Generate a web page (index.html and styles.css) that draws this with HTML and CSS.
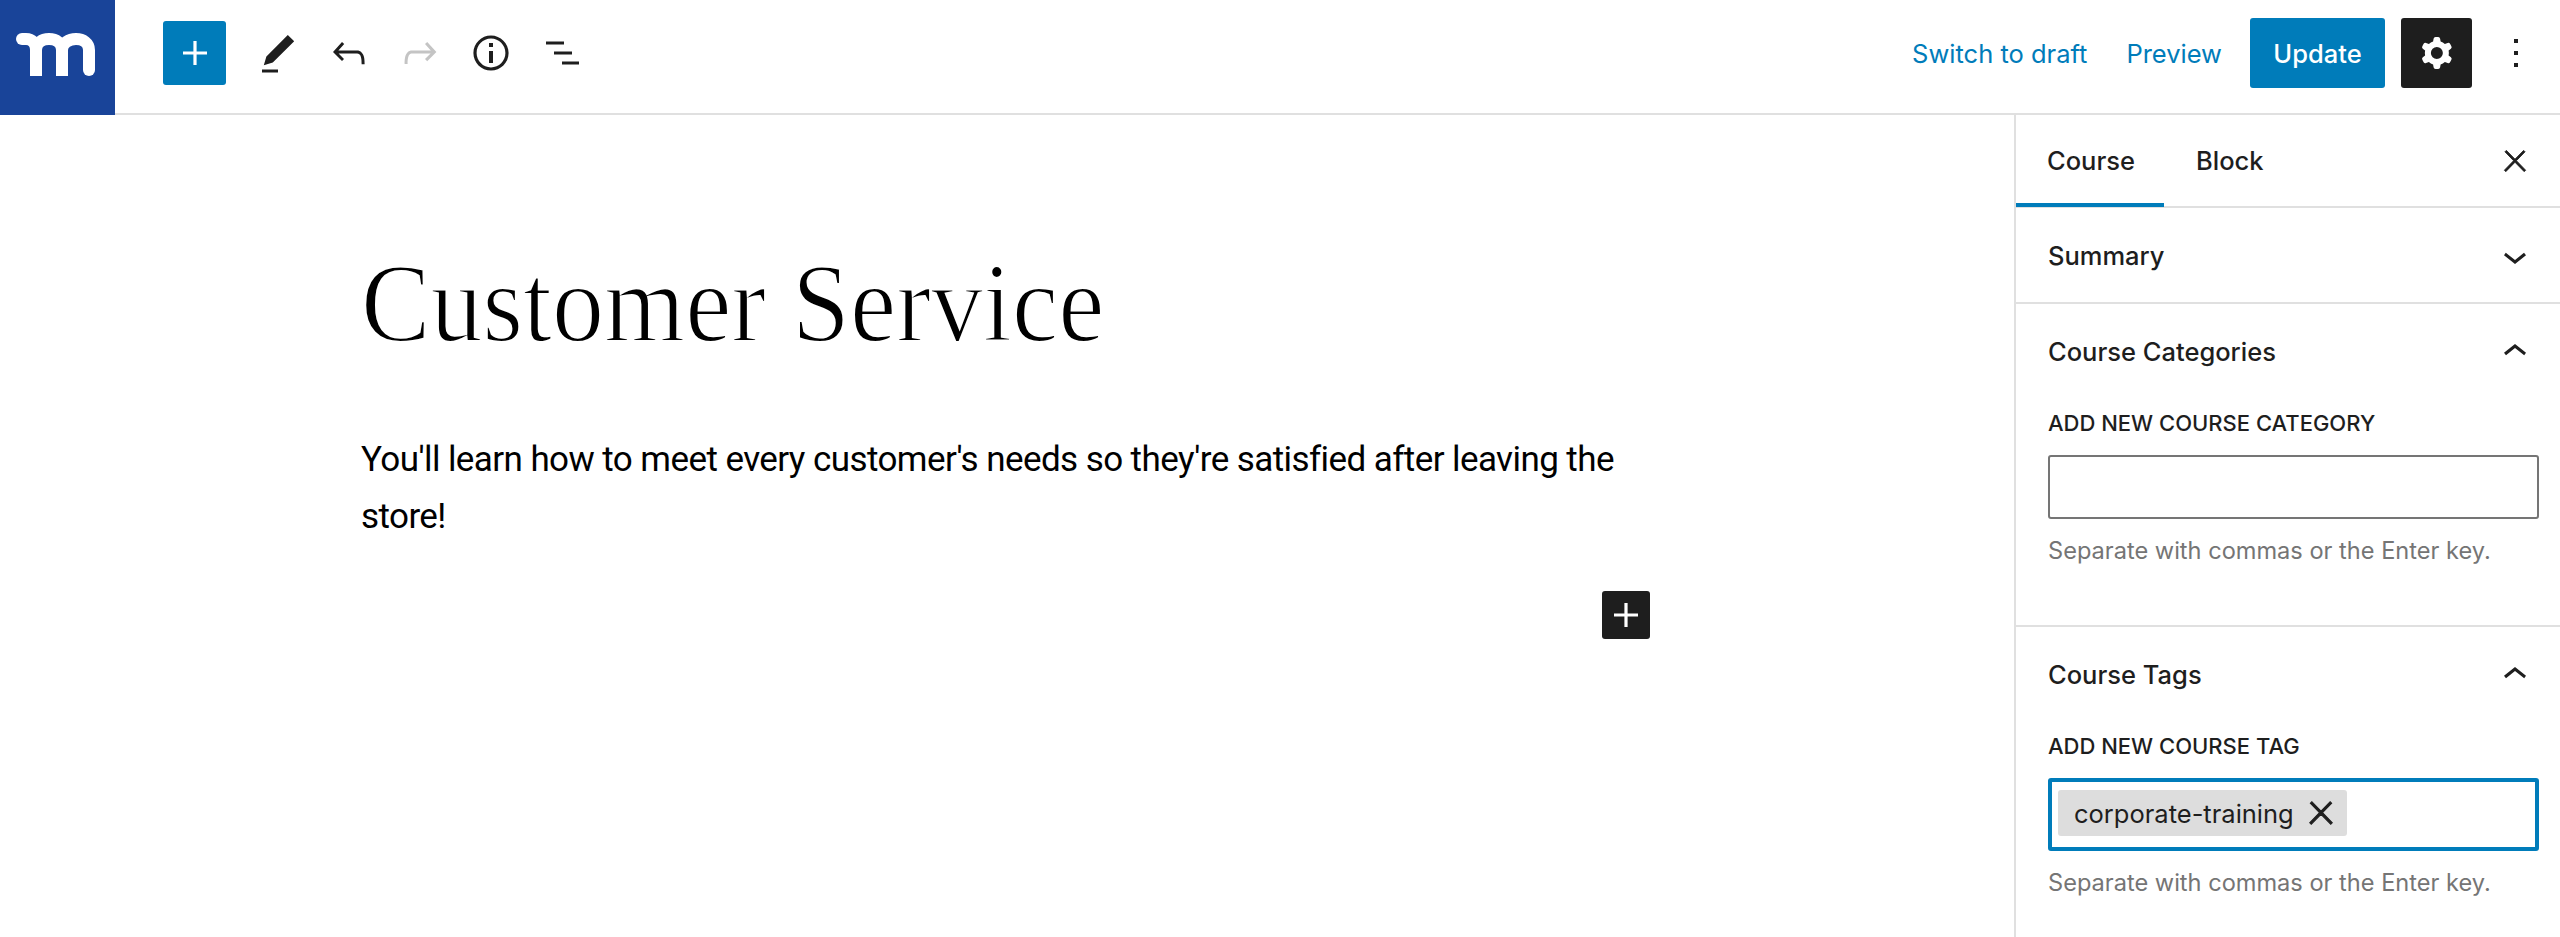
FILE: index.html
```html
<!DOCTYPE html>
<html lang="en">
<head>
<meta charset="utf-8">
<title>Customer Service</title>
<link rel="stylesheet" href="styles.css">
</head>
<body>
<header class="topbar">
  <div class="logo">
    <svg class="logo-mark" viewBox="0 0 115 114"><circle class="logo-dot" cx="22" cy="39" r="6"/><path d="M22 39h4c6 0 10 4 10 11v26M36 50c0-7 6-11 13-11s13 4 13 11v26M62 50c0-7 7-11 14-11s13 4 13 11v20"/><path class="logo-tail" d="M89 60v10"/></svg>
  </div>
  <div class="tools">
    <button class="btn-add"><svg class="icon" viewBox="0 0 24 24"><path d="M18 11.2h-5.2V6h-1.6v5.2H6v1.6h5.2V18h1.6v-5.2H18z"/></svg></button>
    <svg class="icon tool tool-pen" viewBox="0 0 24 24"><path d="M20.1 5.1L16.9 2 6.2 12.7l-1.3 4.4 4.5-1.3L20.1 5.1zM4 20.8h8v-1.5H4v1.5z"/></svg>
    <svg class="icon tool" viewBox="0 0 24 24"><path d="M18.3 11.7c-.6-.6-1.4-.9-2.3-.9H6.7l2.9-3.3-1.1-1-4.5 5L8.5 16l1-1-2.7-2.7H16c.5 0 .9.2 1.3.5 1 1 1 3.4 1 4.5v.3h1.5v-.2c0-1.5 0-4.3-1.5-5.7z"/></svg>
    <svg class="icon tool tool-off" viewBox="0 0 24 24"><path d="M15.6 6.5l-1.1 1 2.9 3.3H8c-.9 0-1.7.3-2.3.9-1.4 1.5-1.4 4.2-1.4 5.6v.2h1.5v-.3c0-1.1 0-3.5 1-4.5.3-.3.7-.5 1.3-.5h9.2L14.5 15l1.1 1.1 4.6-4.6-4.6-5z"/></svg>
    <svg class="icon tool" viewBox="0 0 24 24"><path d="M12 3.2c-4.8 0-8.8 3.9-8.8 8.8 0 4.8 3.9 8.8 8.8 8.8 4.8 0 8.8-3.9 8.8-8.8 0-4.8-4-8.8-8.8-8.8zm0 16c-4 0-7.2-3.3-7.2-7.2C4.8 8 8 4.8 12 4.8s7.2 3.3 7.2 7.2c0 4-3.2 7.2-7.2 7.2zM11 17h2v-6h-2v6zm0-8h2V7h-2v2z"/></svg>
    <svg class="icon tool" viewBox="0 0 24 24"><path d="M4 6.2h9v1.5H4zM8 11.2h9v1.5H8zM12 16.2h8.5v1.5H12z"/></svg>
  </div>
  <div class="actions">
    <a class="link link-draft">Switch to draft</a>
    <a class="link link-preview">Preview</a>
    <button class="btn-update">Update</button>
    <button class="btn-settings"><svg class="icon" viewBox="0 0 24 24"><path fill-rule="evenodd" d="M10.289 4.836A1 1 0 0111.275 4h1.306a1 1 0 01.987.836l.244 1.466c.787.26 1.503.679 2.108 1.218l1.393-.522a1 1 0 011.216.437l.653 1.13a1 1 0 01-.23 1.273l-1.148.944a6.025 6.025 0 010 2.435l1.149.946a1 1 0 01.23 1.272l-.653 1.13a1 1 0 01-1.216.437l-1.394-.522c-.605.54-1.32.958-2.108 1.218l-.244 1.466a1 1 0 01-.987.836h-1.306a1 1 0 01-.986-.836l-.244-1.466a5.995 5.995 0 01-2.108-1.218l-1.394.522a1 1 0 01-1.217-.436l-.653-1.131a1 1 0 01.23-1.272l1.149-.946a6.026 6.026 0 010-2.435l-1.148-.944a1 1 0 01-.23-1.272l.653-1.131a1 1 0 011.217-.437l1.393.522a5.994 5.994 0 012.108-1.218l.244-1.466zM14.929 12a3 3 0 11-6 0 3 3 0 016 0z"/></svg></button>
    <svg class="icon more" viewBox="0 0 24 24"><path d="M13 19h-2v-2h2v2zm0-6h-2v-2h2v2zm0-6h-2V5h2v2z"/></svg>
  </div>
</header>
<div class="layout">
  <main class="editor">
    <div class="column">
      <h1 class="post-title">Customer Service</h1>
      <p class="post-text">You'll learn how to meet every customer's needs so they're satisfied after leaving the store!</p>
      <div class="appender">
        <button class="btn-block"><svg class="icon-block" viewBox="0 0 24 24"><path d="M18 11.2h-5.2V6h-1.6v5.2H6v1.6h5.2V18h1.6v-5.2H18z"/></svg></button>
      </div>
    </div>
  </main>
  <aside class="sidebar">
    <div class="tabs">
      <div class="tab tab-active">Course</div>
      <div class="tab">Block</div>
      <svg class="close" viewBox="0 0 24 24"><path d="M13 11.8l6.1-6.3-1-1-6.1 6.2-6.1-6.2-1 1 6.1 6.3-6.5 6.7 1 1 6.5-6.6 6.5 6.6 1-1z"/></svg>
    </div>
    <section class="panel panel-closed">
      <div class="panel-head"><span>Summary</span><svg class="icon" viewBox="0 0 24 24"><path d="M17.5 11.6L12 16l-5.5-4.4.9-1.2L12 14l4.5-3.6 1 1.2z"/></svg></div>
    </section>
    <section class="panel panel-cat">
      <div class="panel-head"><span>Course Categories</span><svg class="icon" viewBox="0 0 24 24"><path d="M6.5 12.4L12 8l5.5 4.4-.9 1.2L12 10l-4.5 3.6-1-1.2z"/></svg></div>
      <div class="field-label">ADD NEW COURSE CATEGORY</div>
      <div class="field"></div>
      <div class="help">Separate with commas or the Enter key.</div>
    </section>
    <section class="panel panel-tags">
      <div class="panel-head"><span>Course Tags</span><svg class="icon" viewBox="0 0 24 24"><path d="M6.5 12.4L12 8l5.5 4.4-.9 1.2L12 10l-4.5 3.6-1-1.2z"/></svg></div>
      <div class="field-label">ADD NEW COURSE TAG</div>
      <div class="field field-focus">
        <span class="token">corporate-training<svg class="token-x" viewBox="0 0 24 24"><path d="M13 11.8l6.1-6.3-1-1-6.1 6.2-6.1-6.2-1 1 6.1 6.3-6.5 6.7 1 1 6.5-6.6 6.5 6.6 1-1z"/></svg></span>
      </div>
      <div class="help">Separate with commas or the Enter key.</div>
    </section>
  </aside>
</div>
</body>
</html>
```
FILE: styles.css
```css
* { box-sizing: border-box; }
html, body { margin: 0; height: 100%; }
body {
  background: #fff;
  color: #1e1e1e;
  font-family: Inter, "Liberation Sans", sans-serif;
  font-size: 25.5px;
  overflow: hidden;
}
button { border: 0; padding: 0; font: inherit; display: flex; align-items: center; justify-content: center; }
.icon { width: 48px; height: 48px; fill: currentColor; flex: none; display: block; }

.topbar { display: flex; align-items: center; height: 115px; padding-bottom: 7px; border-bottom: 2px solid #e0e0e0; }
.logo { width: 115px; height: 115px; margin-bottom: -9px; background: #194499; flex: none; align-self: flex-start; }
.logo-mark { display: block; width: 115px; height: 114px; fill: none; stroke: #fff; stroke-width: 12; stroke-linecap: butt; }
.logo-dot { fill: #fff; stroke: none; }
.logo-tail { stroke-linecap: round; }
.tools { display: flex; align-items: center; margin-left: 48px; gap: 23px; }
.btn-add { width: 63px; height: 64px; background: #007cba; color: #fff; border-radius: 3px; margin-right: 5px; }
.tool { color: #1e1e1e; }
.tool-pen { margin-top: 4px; }
.tool-off { color: #c4c4c4; }
.actions { margin-left: auto; display: flex; align-items: center; }
.link { color: #007cba; }
.link-draft { margin-right: 39px; }
.link-preview { margin-right: 28px; }
.btn-update { width: 135px; height: 70px; background: #007cba; color: #fff; border-radius: 3px; font-weight: 500; }
.btn-settings { width: 71px; height: 70px; margin-left: 16px; background: #1e1e1e; color: #fff; border-radius: 3px; }
.more { margin: 0 20px 0 20px; }

.layout { display: flex; height: 822px; }
.editor { flex: 1; min-width: 0; }
.column { width: 1289px; margin-left: 361px; }
.post-title { margin: 127px 0 0; font-family: "Liberation Serif", serif; font-weight: 400; font-size: 112px; line-height: 1.1; color: #000; white-space: nowrap; transform: scaleX(0.93); transform-origin: left center; -webkit-text-stroke: 2px #fff; }
.post-text { margin: 66px 0 0; width: 1270px; font-family: Roboto, sans-serif; font-size: 35px; letter-spacing: -0.58px; line-height: 57px; color: #000; }
.appender { display: flex; justify-content: flex-end; margin-top: 46px; }
.btn-block { width: 48px; height: 48px; background: #1e1e1e; color: #fff; border-radius: 3px; }
.icon-block { width: 48px; height: 48px; fill: currentColor; }

.sidebar { width: 546px; flex: none; border-left: 2px solid #e0e0e0; }
.tabs { display: flex; align-items: center; height: 93px; border-bottom: 2px solid #e0e0e0; }
.tab { height: 93px; padding: 0 32px; display: flex; align-items: center; font-weight: 500; }
.tab-active { border-bottom: 4px solid #007cba; padding: 4px 0 0 31px; width: 148px; }
.close { margin-left: auto; margin-right: 28px; width: 34px; height: 34px; fill: currentColor; stroke: currentColor; stroke-width: .6; }
.panel { border-bottom: 2px solid #e0e0e0; padding: 0 21px 0 32px; }
.panel-closed { height: 96px; }
.panel-cat { height: 323px; }
.panel-tags { border-bottom: 0; }
.panel-head { display: flex; align-items: center; justify-content: space-between; height: 95px; font-weight: 500; }
.field-label { font-size: 22px; font-weight: 500; line-height: 30px; margin-top: 9px; }
.field { height: 64px; margin-top: 17px; border: 2px solid #757575; border-radius: 3px; }
.field-focus { height: 73px; margin-top: 17px; border: 4px solid #007cba; padding: 8px 6px; display: flex; align-items: flex-start; }
.help { margin-top: 17px; font-size: 23.6px; line-height: 30px; color: #757575; }
.token { display: flex; align-items: center; height: 46px; padding: 0 8px 0 16px; background: #ddd; border-radius: 3px; color: #1e1e1e; }
.token-x { width: 36px; height: 36px; margin-left: 9px; fill: currentColor; stroke: currentColor; stroke-width: .7; }
```
